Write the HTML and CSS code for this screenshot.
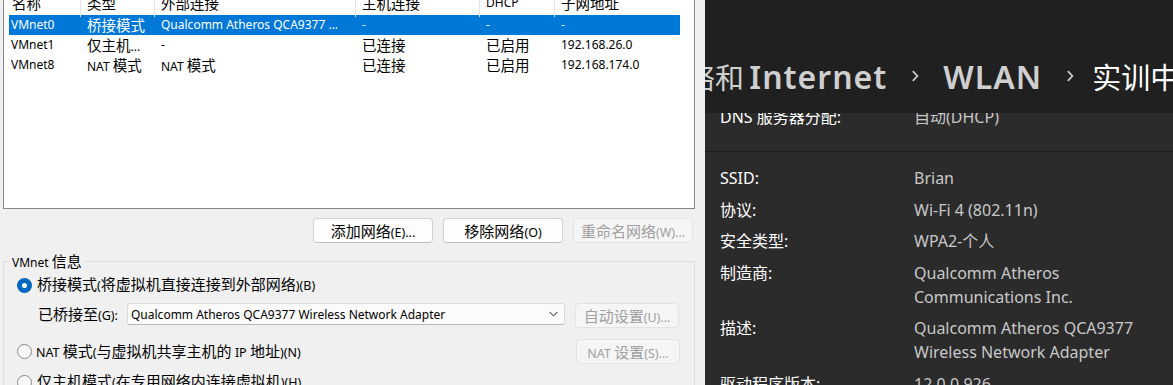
FILE: index.html
```html
<!DOCTYPE html>
<html lang="zh-CN">

<head>
  <meta charset="utf-8" />
  <title>虚拟网络编辑器</title>
  <link rel="stylesheet" href="styles.css">
</head>

<body>
  <div class="dialog">
    <div class="list">
      <div class="list-head">
        <div><span class="zh">名称</span></div>
        <div><span class="zh">类型</span></div>
        <div><span class="zh">外部连接</span></div>
        <div><span class="zh">主机连接</span></div>
        <div>DHCP</div>
        <div><span class="zh">子网地址</span></div>
      </div>
      <div class="list-row selected">
        <div>VMnet0</div>
        <div><span class="zh">桥接模式</span></div>
        <div>Qualcomm Atheros QCA9377 ...</div>
        <div>-</div>
        <div>-</div>
        <div>-</div>
      </div>
      <div class="list-row">
        <div>VMnet1</div>
        <div><span class="zh">仅主机</span>...</div>
        <div>-</div>
        <div><span class="zh">已连接</span></div>
        <div><span class="zh">已启用</span></div>
        <div>192.168.26.0</div>
      </div>
      <div class="list-row">
        <div>VMnet8</div>
        <div>NAT <span class="zh">模式</span></div>
        <div>NAT <span class="zh">模式</span></div>
        <div><span class="zh">已连接</span></div>
        <div><span class="zh">已启用</span></div>
        <div>192.168.174.0</div>
      </div>
    </div>

    <div class="actions">
      <button class="btn"><span class="zh">添加网络</span>(E)...</button>
      <button class="btn"><span class="zh">移除网络</span>(O)</button>
      <button class="btn" disabled><span class="zh">重命名网络</span>(W)...</button>
    </div>

    <fieldset class="group">
      <legend>VMnet <span class="zh">信息</span></legend>
      <div class="option first">
        <span class="radio on"></span>
        <span><span class="zh">桥接模式</span>(<span class="zh">将虚拟机直接连接到外部网络</span>)(B)</span>
      </div>
      <div class="bridge">
        <span class="bridge-label"><span class="zh">已桥接至</span>(G):</span>
        <div class="select">
          <span>Qualcomm Atheros QCA9377 Wireless Network Adapter</span>
          <svg width="9" height="6" viewBox="0 0 9 6">
            <path d="M0.5 0.8 4.5 4.8 8.5 0.8" fill="none" stroke="#606060" stroke-width="1.1" />
          </svg>
        </div>
        <button class="btn small" disabled><span class="zh">自动设置</span>(U)...</button>
      </div>
      <div class="option nat">
        <span class="radio"></span>
        <span>NAT <span class="zh">模式</span>(<span class="zh">与虚拟机共享主机的</span> IP <span class="zh">地址</span>)(N)</span>
        <button class="btn small" disabled>NAT <span class="zh">设置</span>(S)...</button>
      </div>
      <div class="option">
        <span class="radio"></span>
        <span><span class="zh">仅主机模式</span>(<span class="zh">在专用网络内连接虚拟机</span>)(H)</span>
      </div>
    </fieldset>
  </div>

  <div class="settings">
    <div class="crumbs">
      <span class="crumb"><span class="cjk">络和</span> Internet</span>
      <svg class="chev" width="8" height="12" viewBox="0 0 8 12">
        <path d="M1.8 1.2 6.4 6 1.8 10.8" fill="none" stroke="currentColor" stroke-width="1.7" />
      </svg>
      <span class="crumb">WLAN</span>
      <svg class="chev" width="8" height="12" viewBox="0 0 8 12">
        <path d="M1.8 1.2 6.4 6 1.8 10.8" fill="none" stroke="currentColor" stroke-width="1.7" />
      </svg>
      <span class="crumb current"><span class="cjk">实训中心</span></span>
    </div>

    <div class="props">
      <div class="card dns">
        <div class="prop"><span class="key">DNS 服务器分配:</span><span class="val">自动(DHCP)</span></div>
      </div>
      <div class="card info">
        <div class="prop"><span class="key">SSID:</span><span class="val">Brian</span></div>
        <div class="prop"><span class="key">协议:</span><span class="val">Wi-Fi 4 (802.11n)</span></div>
        <div class="prop"><span class="key">安全类型:</span><span class="val">WPA2-个人</span></div>
        <div class="prop"><span class="key">制造商:</span><span class="val">Qualcomm Atheros<br>Communications Inc.</span></div>
        <div class="prop"><span class="key">描述:</span><span class="val">Qualcomm Atheros QCA9377<br>Wireless Network Adapter</span></div>
        <div class="prop"><span class="key">驱动程序版本:</span><span class="val">12.0.0.926</span></div>
      </div>
    </div>
  </div>
</body>

</html>
```

FILE: styles.css
```css
* {
  box-sizing: border-box;
}

body {
  margin: 0;
  height: 385px;
  overflow: hidden;
  display: flex;
  font-family: "Segoe UI", "Noto Sans", "Noto Sans CJK SC", sans-serif;
  font-size: 12px;
  color: #000;
  background: #f0f0f0;
}

.zh {
  font-family: "Microsoft YaHei", "Noto Sans CJK SC", sans-serif;
  font-size: 15px;
}

.list .zh {
  font-size: 14.5px;
}

/* dialog */
.dialog {
  width: 705px;
  flex: none;
  padding: 0 10px 0 3px;
  background: #f0f0f0;
}

.list {
  height: 219px;
  margin-top: -10px;
  background: #fff;
  border: 1px solid #828790;
  overflow: hidden;
}

.list-head {
  display: grid;
  grid-template-columns: 76px 74px 201px 124px 75px 126px;
  height: 24px;
  line-height: 24px;
  white-space: nowrap;
}

.list-head div {
  padding-left: 6px;
  border-left: 1px solid #e5e5e5;
}

.list-head div:first-child {
  padding-left: 8px;
  border-left: 0;
}

.list-row {
  display: grid;
  grid-template-columns: 71px 74px 201px 124px 75px 126px;
  width: 671px;
  height: 20px;
  line-height: 20px;
  margin-left: 5px;
  white-space: nowrap;
}

.list-row div {
  padding-left: 7px;
  overflow: hidden;
}

.list-row div:first-child {
  padding-left: 2px;
}

.list-row.selected {
  background: #0078d7;
  color: #fff;
}

.actions {
  display: flex;
  justify-content: flex-end;
  gap: 10px;
  margin-top: 9px;
  padding-right: 2px;
}

.btn {
  width: 120px;
  height: 25px;
  padding: 0;
  border: 1px solid #d0d0d0;
  border-bottom-color: #c2c2c2;
  border-radius: 4px;
  background: #fdfdfd;
  color: #000;
  font-family: "Segoe UI", "Noto Sans", "Noto Sans CJK SC", sans-serif;
  font-size: 12.5px;
  line-height: 23px;
  white-space: nowrap;
}

.btn:disabled {
  color: #a0a0a0;
  background: #f5f5f5;
  border-color: #e3e3e3;
}

.btn.small {
  width: 104px;
  flex: none;
}

.group {
  margin: 8px 0 0;
  padding: 0 14px 0 0;
  border: 1px solid #dcdcdc;
  border-bottom: 0;
  min-width: 0;
}

.group legend {
  margin-left: 6px;
  padding: 0 2px;
  height: 20px;
  line-height: 20px;
}

.option {
  display: flex;
  align-items: center;
  height: 20px;
  margin: 8px 0 0 13px;
  line-height: 20px;
  font-size: 12.5px;
  white-space: nowrap;
}

.option.first {
  margin-top: 4px;
}

.option.nat {
  height: 25px;
  margin-top: 11px;
}

.option.nat .btn {
  margin-left: auto;
}

.radio {
  flex: none;
  width: 15px;
  height: 15px;
  margin-right: 5px;
  border: 1px solid #8a8a8a;
  border-radius: 50%;
  background: #f7f7f7;
}

.option.nat .radio {
  margin-right: 4px;
}

.radio.on {
  border: 5px solid #0067c0;
  background: #fff;
}

.bridge {
  display: flex;
  align-items: flex-start;
  margin-top: 8px;
  padding-left: 34px;
  white-space: nowrap;
}

.bridge-label {
  width: 89px;
  line-height: 22px;
  font-size: 12.5px;
}

.select {
  display: flex;
  align-items: center;
  justify-content: space-between;
  width: 438px;
  height: 22px;
  padding: 0 6px 0 3px;
  margin-right: 10px;
  border: 1px solid #dadada;
  border-bottom-color: #b8b8b8;
  border-radius: 3px;
  background: #fbfbfb;
}

/* settings panel */
.settings {
  flex: 1;
  min-width: 0;
  display: flex;
  flex-direction: column;
  background: #202020;
  color: #fff;
  overflow: hidden;
}

.crumbs {
  flex: none;
  height: 113px;
  padding-top: 39px;
  margin-left: -19px;
  display: flex;
  align-items: center;
  gap: 24px;
  white-space: nowrap;
  font-family: "Segoe UI Variable Display", "Segoe UI", "Noto Sans", sans-serif;
  font-size: 32px;
  font-weight: 600;
}

.crumb {
  color: #cfcfcf;
  letter-spacing: 1px;
  word-spacing: -4px;
}

.crumb .cjk {
  font-family: "Microsoft YaHei", "Noto Sans CJK SC", sans-serif;
  font-size: 29px;
  font-weight: 400;
  letter-spacing: 0;
}

.crumb.current {
  margin-left: -6px;
  color: #fff;
}

.chev {
  flex: none;
  color: #cfcfcf;
}

.props {
  flex: 1;
  background: #2b2b2b;
  overflow: hidden;
}

.card {
  padding-left: 15px;
  background: #2b2b2b;
}

.card.dns {
  height: 39px;
  overflow: hidden;
  border-bottom: 1px solid #1c1c1c;
}

.card.dns .prop {
  margin-top: -8px;
}

.card.info {
  display: flex;
  flex-direction: column;
  gap: 7.5px;
  padding-top: 14px;
}

.prop {
  display: grid;
  grid-template-columns: 194px 1fr;
  font-size: 16px;
  line-height: 24px;
  white-space: nowrap;
}

.key {
  color: #fff;
}

.val {
  color: #c8c8c8;
}
```
